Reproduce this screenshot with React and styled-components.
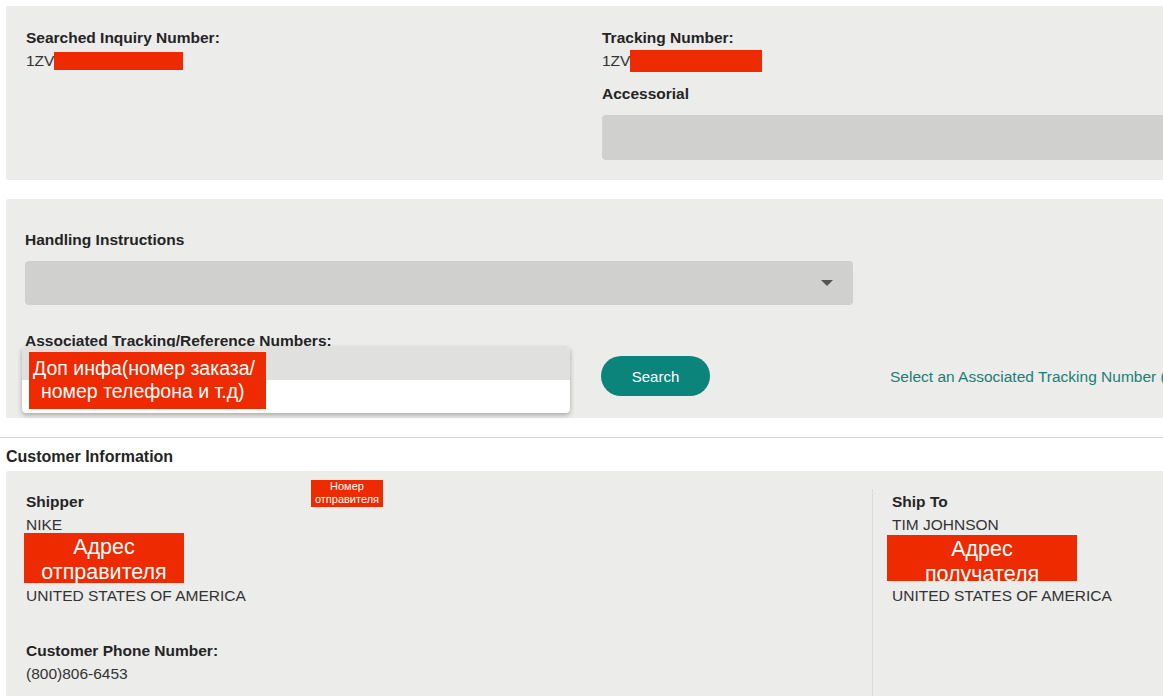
import styled, { createGlobalStyle } from "styled-components";

const GlobalStyle = createGlobalStyle`
  body {
    margin: 0;
    background: #ffffff;
    font-family: "Liberation Sans", Arial, sans-serif;
    color: #242424;
  }
`;

// 스크린샷 폭보다 넓은 화면이라 오른쪽이 잘려 보임
const Page = styled.div`
  width: 1163px;
  height: 696px;
  overflow: hidden;
`;

const Inner = styled.div`
  width: 1300px;
  padding: 6px 0 0 6px;
`;

const Panel = styled.section`
  background: #ececeb;
  border-radius: 3px;
  padding: ${(p) => p.$pad};
  margin-bottom: ${(p) => p.$mb || "0"};
`;

const TopGrid = styled.div`
  display: grid;
  grid-template-columns: 576px 1fr;
`;

const Field = styled.div`
  display: flex;
  flex-direction: column;
`;

const Label = styled.div`
  font-size: 15.5px;
  font-weight: 700;
  line-height: 21px;
  color: #242424;
  margin-top: ${(p) => p.$mt || "0"};
`;

const Value = styled.div`
  font-size: 15.5px;
  line-height: 25px;
  color: #333;
  display: flex;
  align-items: center;
  margin-top: ${(p) => p.$mt || "0"};
`;

const Redact = styled.span`
  display: inline-block;
  background: #ee2a00;
  width: ${(p) => p.$w}px;
  height: ${(p) => p.$h}px;
`;

const GrayBox = styled.div`
  background: #d0d0cf;
  border-radius: 4px;
  height: ${(p) => p.$h || 45}px;
  width: ${(p) => p.$w || "auto"};
  margin-top: 11px;
  display: flex;
  align-items: center;
  justify-content: flex-end;
  padding-right: 20px;
  box-sizing: border-box;
`;

const Caret = styled.span`
  width: 0;
  height: 0;
  border-left: 6px solid transparent;
  border-right: 6px solid transparent;
  border-top: 6px solid #555;
`;

const AssocRow = styled.div`
  display: flex;
  align-items: flex-start;
  margin-top: -4px;
`;

const DropDown = styled.div`
  position: relative;
  width: 548px;
  height: 66px;
  margin-left: -3px;
  background: #fff;
  border-radius: 4px;
  box-shadow: 0 2px 5px rgba(0, 0, 0, 0.3);
  overflow: hidden;
`;

const DropHead = styled.div`
  height: 33px;
  background: #e0e0df;
`;

const Note = styled.div`
  position: absolute;
  background: #ee2a00;
  color: #fff;
  text-align: ${(p) => p.$align || "center"};
  font-family: "Liberation Sans", Arial, sans-serif;
  font-size: ${(p) => p.$fs}px;
  line-height: ${(p) => p.$lh}px;
  left: ${(p) => p.$x}px;
  top: ${(p) => p.$y}px;
  width: ${(p) => p.$w}px;
  height: ${(p) => p.$h}px;
  padding: ${(p) => p.$pad || "0"};
  box-sizing: border-box;
  overflow: hidden;
  white-space: nowrap;
`;

const Indent = styled.span`
  padding-left: 8px;
`;

const SearchButton = styled.button`
  margin: 9px 0 0 31px;
  width: 109px;
  height: 40px;
  border: 0;
  border-radius: 20px;
  background: #0b847c;
  color: #fff;
  font-family: "Liberation Sans", Arial, sans-serif;
  font-size: 15px;
`;

const SelectLink = styled.span`
  margin: 20px 0 0 180px;
  font-size: 15.5px;
  line-height: 20px;
  color: #1a7e76;
  white-space: nowrap;
`;

const Rule = styled.hr`
  border: 0;
  border-top: 1px solid #d6d6d6;
  margin: 19px 0 0 -6px;
`;

const SectionTitle = styled.div`
  font-size: 16px;
  font-weight: 700;
  line-height: 20px;
  margin: 9px 0 4px;
`;

const CustomerPanel = styled.section`
  position: relative;
  background: #ececeb;
  border-radius: 3px;
  display: grid;
  grid-template-columns: 866px 1fr;
  height: 260px;
`;

const Party = styled.div`
  padding: 20px 20px 0 20px;
`;

const PartyRight = styled(Party)`
  border-left: 1px solid #dcdcdc;
  margin-top: 18px;
  padding: 2px 20px 0 19px;
`;

const AddrBox = styled.div`
  background: #ee2a00;
  color: #fff;
  font-size: 21.5px;
  line-height: 25px;
  text-align: center;
  width: ${(p) => p.$w}px;
  height: ${(p) => p.$h}px;
  margin: ${(p) => p.$m};
  padding-top: 2px;
  box-sizing: border-box;
  overflow: hidden;
`;

export default function App() {
  return (
    <Page>
      <GlobalStyle />
      <Inner>
        <Panel $pad="21px 20px 20px 20px" $mb="19px">
          <TopGrid>
            <Field>
              <Label>Searched Inquiry Number:</Label>
              <Value>
                1ZV<Redact $w={129} $h={18} />
              </Value>
            </Field>
            <Field>
              <Label>Tracking Number:</Label>
              <Value>
                1ZV<Redact $w={132} $h={22} />
              </Value>
              <Label $mt="10px">Accessorial</Label>
              <GrayBox />
            </Field>
          </TopGrid>
        </Panel>

        <Panel $pad="30px 19px 5px 19px">
          <Label>Handling Instructions</Label>
          <GrayBox $w="828px" $h={44}>
            <Caret />
          </GrayBox>
          <Label $mt="25px">Associated Tracking/Reference Numbers:</Label>
          <AssocRow>
            <DropDown>
              <DropHead />
              <Note $x={7} $y={5} $w={237} $h={57} $fs={19.5} $lh={23} $align="left" $pad="5px 0 0 4px">
                Доп инфа(номер заказа/
                <br />
                <Indent>номер телефона и т.д)</Indent>
              </Note>
            </DropDown>
            <SearchButton>Search</SearchButton>
            <SelectLink>Select an Associated Tracking Number (</SelectLink>
          </AssocRow>
        </Panel>

        <Rule />
        <SectionTitle>Customer Information</SectionTitle>

        <CustomerPanel>
          <Party>
            <Label>Shipper</Label>
            <Value>NIKE</Value>
            <AddrBox $w={160} $h={50} $m="-4px 0 0 -2px">
              Адрес
              <br />
              отправителя
            </AddrBox>
            <Value>UNITED STATES OF AMERICA</Value>
            <Label $mt="32px">Customer Phone Number:</Label>
            <Value>(800)806-6453</Value>
          </Party>
          <PartyRight>
            <Label>Ship To</Label>
            <Value>TIM JOHNSON</Value>
            <AddrBox $w={190} $h={46} $m="-2px 0 0 -5px">
              Адрес
              <br />
              получателя
            </AddrBox>
            <Value $mt="2px">UNITED STATES OF AMERICA</Value>
          </PartyRight>
          <Note $x={305} $y={9} $w={72} $h={27} $fs={11} $lh={13}>
            Номер
            <br />
            отправителя
          </Note>
        </CustomerPanel>
      </Inner>
    </Page>
  );
}
